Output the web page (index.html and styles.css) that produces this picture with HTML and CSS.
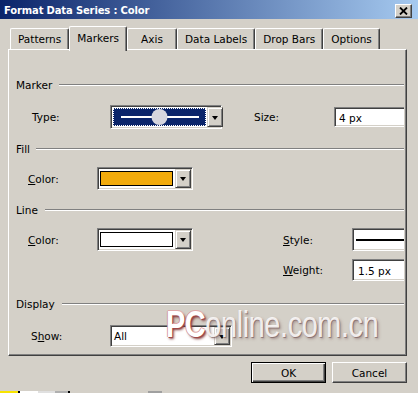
FILE: index.html
```html
<!DOCTYPE html>
<html lang="en">
<head>
    <meta charset="UTF-8" />
    <title>Format Data Series : Color</title>
    <link rel="stylesheet" href="styles.css">
</head>
<body>
    <div class="window">
        <div class="titlebar">
            <span class="title">Format Data Series : Color</span>
            <button class="close">
                <svg width="9" height="8" viewBox="0 0 9 8"><path d="M1 0.5 L8 7.5 M8 0.5 L1 7.5" stroke="#000" stroke-width="1.8" fill="none"/></svg>
            </button>
        </div>

        <div class="tabs">
            <div class="tab">Patterns</div>
            <div class="tab active">Markers</div>
            <div class="tab">Axis</div>
            <div class="tab">Data Labels</div>
            <div class="tab">Drop Bars</div>
            <div class="tab">Options</div>
        </div>

        <div class="panel">
            <div class="panel-body">
                <div class="group g-marker"><span>Marker</span><i class="rule"></i></div>
                <div class="row row-type">
                    <span class="lbl lbl-type">Type:</span>
                    <div class="combo combo-type">
                        <div class="marker-sel">
                            <svg width="93" height="20" viewBox="0 0 93 20">
                                <rect x="8" y="9" width="78" height="2" fill="#fff"/>
                                <circle cx="46.5" cy="10" r="8" fill="#d6d6de"/>
                            </svg>
                        </div>
                        <span class="drop"><i class="arrow"></i></span>
                    </div>
                    <span class="lbl lbl-size">Size:</span>
                    <div class="field field-size">4 px</div>
                </div>

                <div class="group g-fill"><span>Fill</span><i class="rule"></i></div>
                <div class="row row-color">
                    <span class="lbl lbl-color"><u>C</u>olor:</span>
                    <div class="combo combo-color">
                        <span class="swatch orange"></span>
                        <span class="drop"><i class="arrow"></i></span>
                    </div>
                </div>

                <div class="group g-line"><span>Line</span><i class="rule"></i></div>
                <div class="row row-color">
                    <span class="lbl lbl-color"><u>C</u>olor:</span>
                    <div class="combo combo-color">
                        <span class="swatch white"></span>
                        <span class="drop"><i class="arrow"></i></span>
                    </div>
                    <span class="lbl lbl-style"><u>S</u>tyle:</span>
                    <div class="field field-style"><i class="stroke"></i></div>
                </div>
                <div class="row row-weight">
                    <span class="lbl lbl-style"><u>W</u>eight:</span>
                    <div class="field field-weight">1.5 px</div>
                </div>

                <div class="group g-display"><span>Display</span><i class="rule"></i></div>
                <div class="row row-show">
                    <span class="lbl lbl-show">S<u>h</u>ow:</span>
                    <div class="combo combo-show">
                        <span class="value">All</span>
                        <span class="drop"><i class="arrow"></i></span>
                    </div>
                </div>
            </div>
        </div>

        <div class="footer">
            <button class="btn default">OK</button>
            <button class="btn">Cancel</button>
        </div>
        <div class="taskbar"></div>

        <div class="watermark"><b>PC</b>online.com.cn</div>
    </div>
</body>
</html>
```

FILE: styles.css
```css
* {
    box-sizing: border-box;
}
body {
    margin: 0;
    background: #d4d0c8;
    font-family: "DejaVu Sans", Tahoma, sans-serif;
    font-size: 10.5px;
    color: #000;
}
.window {
    position: relative;
    width: 418px;
    height: 393px;
    overflow: hidden;
    background: #d4d0c8;
}

/* title bar */
.titlebar {
    height: 19px;
    display: flex;
    align-items: center;
    justify-content: space-between;
    padding: 1px 6px 0 4px;
    background: linear-gradient(to right, #0a246a, #a6caf0);
}
.title {
    color: #fff;
    font-weight: bold;
    font-size: 10px;
    letter-spacing: -0.15px;
}
.close {
    width: 17px;
    height: 14px;
    padding: 0;
    margin-top: 2px;
    display: flex;
    align-items: center;
    justify-content: center;
    background: #d4d0c8;
    border: 1px solid;
    border-color: #fff #404040 #404040 #fff;
    box-shadow: inset -1px -1px #808080;
}

/* tabs */
.tabs {
    display: flex;
    align-items: flex-end;
    height: 23px;
    margin-top: 7px;
    padding-left: 10px;
}
.tab {
    height: 21px;
    min-width: 50px;
    padding: 0 7px;
    display: flex;
    align-items: center;
    justify-content: center;
    border: 1px solid;
    border-bottom: none;
    border-color: #fff #404040 #404040 #fff;
    border-radius: 2px 2px 0 0;
    box-shadow: inset -1px 0 #808080;
    background: #d4d0c8;
}
.tab.active {
    position: relative;
    z-index: 1;
    height: 25px;
    margin-bottom: -2px;
    padding-bottom: 3px;
}

/* panel */
.panel {
    width: 399px;
    height: 307px;
    margin-left: 8px;
    border: 1px solid;
    border-color: #fff #404040 #404040 #fff;
    box-shadow: inset -1px -1px #808080;
}
.panel-body {
    height: 100%;
    margin-right: 2px;
    padding-top: 28px;
    overflow: hidden;
}
.group {
    display: flex;
    align-items: center;
    height: 14px;
    padding-left: 7px;
}
.rule {
    flex: 1;
    height: 2px;
    margin-left: 7px;
    border-top: 1px solid #808080;
    border-bottom: 1px solid #fff;
}
.g-fill { margin-top: 13px; }
.g-line { margin-top: 13px; }
.g-display { margin-top: 16px; }
.g-fill .rule { margin-left: 6px; }

.row {
    display: flex;
    align-items: center;
    white-space: nowrap;
}
.lbl {
    flex: none;
}
.row-type {
    height: 24px;
    margin-top: 13px;
    padding-left: 23px;
}
.lbl-type { width: 78px; }
.lbl-size { width: 80px; margin-left: 32px; }

.row-color {
    height: 23px;
    margin-top: 11px;
    padding-left: 19px;
}
.lbl-color { width: 69px; }
.lbl-style { width: 69px; }
.row-color .lbl-style { margin-left: 90px; }

.row-weight {
    height: 22px;
    margin-top: 8px;
    padding-left: 274px;
}
.row-show {
    height: 22px;
    margin-top: 14px;
    padding-left: 22px;
}
.lbl-show { width: 79px; }

/* sunken boxes */
.combo, .field {
    flex: none;
    height: 100%;
    display: flex;
    align-items: stretch;
    background: #fff;
    border: 1px solid;
    border-color: #808080 #fff #fff #808080;
    box-shadow: inset 1px 1px #404040, inset -1px -1px #d4d0c8;
    padding: 1px;
}
.combo-type { width: 112px; }
.combo-color { width: 96px; }
.combo-show { width: 122px; }

.field {
    align-items: center;
    padding: 1px 4px 0;
}
.field-size { width: 80px; height: 20px; }
.field-style { width: 60px; padding: 0 0 0 3px; }
.field-weight { width: 60px; padding-left: 5px; }
.stroke {
    flex: 1;
    height: 2px;
    background: #000;
    margin-top: 1px;
}

.marker-sel {
    flex: 1;
    margin: 1px;
    background: #0a246a;
    outline: 1px dotted #fff;
    outline-offset: -1px;
    display: flex;
    align-items: center;
    justify-content: center;
}
.swatch {
    flex: 1;
    margin: 2px 2px 2px 1px;
    border: 1px solid #000;
}
.swatch.orange { background: #f2ab0c; }
.swatch.white { background: #fff; }
.value {
    flex: 1;
    display: flex;
    align-items: center;
    padding-left: 2px;
}

.drop {
    flex: none;
    width: 16px;
    display: flex;
    align-items: center;
    justify-content: center;
    background: #d4d0c8;
    border: 1px solid;
    border-color: #d4d0c8 #404040 #404040 #d4d0c8;
    box-shadow: inset 1px 1px #fff, inset -1px -1px #808080;
}
.arrow {
    width: 0;
    height: 0;
    border-left: 3.5px solid transparent;
    border-right: 3.5px solid transparent;
    border-top: 4px solid #000;
    margin-top: 1px;
}

/* buttons */
.footer {
    display: flex;
    justify-content: flex-end;
    gap: 6px;
    margin-top: 6px;
    padding-right: 11px;
}
.btn {
    width: 75px;
    height: 21px;
    padding: 0;
    font: inherit;
    color: #000;
    background: #d4d0c8;
    border: 1px solid;
    border-color: #fff #404040 #404040 #fff;
    box-shadow: inset -1px -1px #808080;
}
.btn.default {
    border-color: #000;
    box-shadow: inset 1px 1px #fff, inset -1px -1px #404040, inset -2px -2px #808080;
}

.taskbar {
    height: 2px;
    margin-top: 8px;
    background: linear-gradient(to right, #f8e400 0 18px, #000 18px 20px, #fff 20px 38px, #e0e0e0 38px 55px, #b0b0b0 55px 68px, #000 68px 70px, #d4d0c8 70px 148px, #a0a0a0 148px 162px, #d4d0c8 162px);
}

/* watermark over the dialog */
.watermark {
    position: absolute;
    left: 166px;
    top: 304px;
    font-family: "Liberation Sans", Arial, sans-serif;
    font-size: 37px;
    letter-spacing: -0.5px;
    color: rgba(250, 248, 248, 0.92);
    text-shadow: 1px 1px 0 rgba(110, 80, 80, 0.55), 2px 2px 3px rgba(120, 80, 80, 0.5);
    transform: scaleX(0.78);
    transform-origin: left top;
    white-space: nowrap;
}
.watermark b {
    color: #fff;
    text-shadow: 1px 1px 0 #a04848, -1px 0 0 #d89090, 0 -1px 0 #e0a8a8, 2px 2px 3px #803838;
}
```
